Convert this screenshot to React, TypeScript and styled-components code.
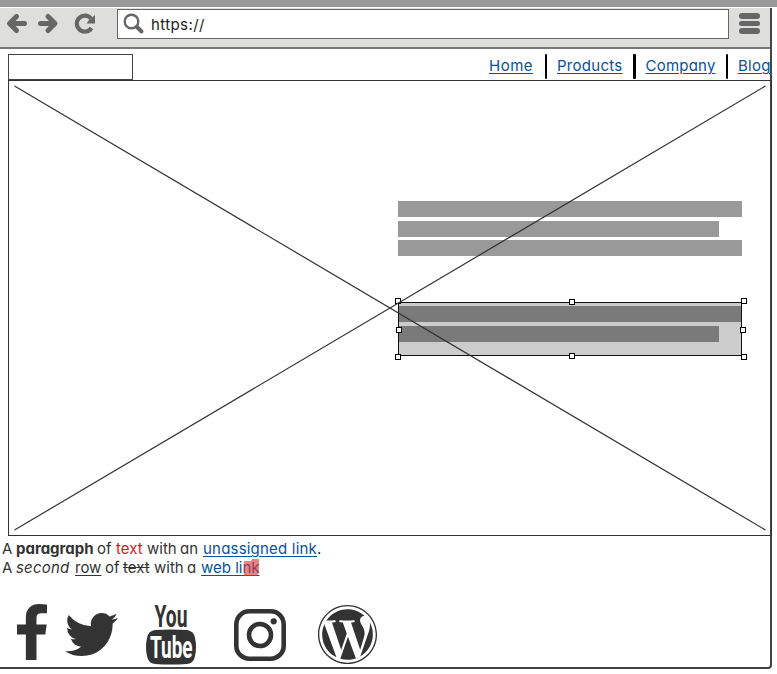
import React from "react";
import styled, { createGlobalStyle } from "styled-components";
import { FaWordpress } from "react-icons/fa";

const Global = createGlobalStyle`
  * { box-sizing: border-box; }
  body { margin: 0; background: #fff; overflow: hidden; }
`;

const Page = styled.div`
  width: 777px;
  height: 674px;
  overflow: hidden;
  color: #333;
  font-family: Inter, "Liberation Sans", sans-serif;
  font-feature-settings: "cv11";
  font-size: 15px;
`;
const TitleBar = styled.div`
  height: 7px;
  background: #999;
`;
const Browser = styled.div`
  margin-top: 1px;
  width: 772px;
  height: 661px;
  border: solid #444;
  border-width: 0 2px 2px 0;
  border-radius: 0 0 4px 0;
`;
const Toolbar = styled.header`
  display: flex;
  align-items: flex-start;
  height: 41px;
  background: #dededc;
  border-bottom: 2px solid #777;
`;
const NavIcons = styled.svg`
  width: 117px;
  height: 38px;
  flex: none;
`;
const Address = styled.div`
  display: flex;
  align-items: center;
  width: 612px;
  height: 30px;
  margin-top: 1px;
  padding-left: 5px;
  background: #fff;
  border: 1px solid #666;
  color: #222;
`;
const SearchIcon = styled.svg`
  width: 22px;
  height: 22px;
  margin-right: 6px;
`;
const Word = styled.span<{ $w?: number; $ls?: number; $color?: string }>`
  display: inline-block;
  width: ${(p) => (p.$w ? `${p.$w}px` : "auto")};
  letter-spacing: ${(p) => p.$ls ?? 0}px;
  color: ${(p) => p.$color ?? "inherit"};
  white-space: nowrap;
`;
const Menu = styled.div`
  display: flex;
  flex-direction: column;
  gap: 2px;
  margin: 5px 0 0 10px;
`;
const MenuBar = styled.i`
  width: 20.5px;
  height: 5.5px;
  border-radius: 3px;
  background: #666;
`;
const SiteHeader = styled.div`
  display: flex;
  justify-content: space-between;
  height: 31px;
  padding: 5px 0 0 8px;
`;
const LogoBox = styled.div`
  width: 125px;
  height: 26px;
  border: 1px solid #444;
`;
const SiteNav = styled.nav`
  display: flex;
  width: 281px;
  height: 26px;
`;
const NavCell = styled.div<{ $w: number }>`
  flex: none;
  display: flex;
  justify-content: space-between;
  width: ${(p) => p.$w}px;
  padding-right: 10px;
`;
const Divider = styled.i`
  width: 2.5px;
  height: 25px;
  background: #000;
  border-radius: 1px;
`;
const Link = styled.a<{ $ls?: number }>`
  color: #04529b;
  text-decoration: underline;
  text-decoration-thickness: 1px;
  text-underline-offset: 2px;
  line-height: 24px;
  letter-spacing: ${(p) => p.$ls ?? 0}px;
`;
const Hero = styled.section`
  position: relative;
  width: 764px;
  height: 456px;
  margin-left: 8px;
  border: 1px solid #333;
`;
const Cross = styled.svg`
  position: absolute;
  left: -1px;
  top: -1px;
  width: 764px;
  height: 456px;
  pointer-events: none;
`;
const Block = styled.div`
  position: absolute;
  left: 389px;
  top: 120px;
  display: flex;
  flex-direction: column;
  gap: 3.7px;
`;
const Bar = styled.i<{ $w: number; $dark?: boolean }>`
  width: ${(p) => p.$w}px;
  height: 16px;
  background: ${(p) => (p.$dark ? "#7a7a7a" : "#999")};
`;
const Selected = styled(Block)`
  top: 221px;
  width: 344px;
  height: 54px;
  padding-top: 3px;
  background: #ccc;
  border: 1px solid #111;
`;
const Handle = styled.b<{ $x: number; $y: number }>`
  position: absolute;
  left: ${(p) => p.$x}px;
  top: ${(p) => p.$y}px;
  width: 6px;
  height: 6px;
  background: #fff;
  border: 1px solid #000;
`;
const Copy = styled.div`
  padding: 3px 0 0 2px;
  line-height: 19px;
  white-space: nowrap;
`;
const Line = styled.p`
  margin: 0;
  height: 19px;
  display: flex;
`;
const Under = styled.span`
  text-decoration: underline;
  text-decoration-thickness: 1px;
  text-underline-offset: 2px;
`;
const WebLink = styled(Link)`
  position: relative;
  line-height: 19px;
`;
const Marker = styled.svg`
  position: absolute;
  left: 42px;
  top: 0;
  width: 17px;
  height: 18px;
`;
const Socials = styled.footer`
  display: flex;
  align-items: flex-start;
  padding: 27px 0 0 17px;
  fill: #333;
`;
const Glyph = styled.svg<{ $w: number; $h: number; $l?: number; $t?: number }>`
  flex: none;
  overflow: visible;
  width: ${(p) => p.$w}px;
  height: ${(p) => p.$h}px;
  margin: ${(p) => p.$t ?? 0}px 0 0 ${(p) => p.$l ?? 0}px;
`;
const LogoText = styled.text`
  font-family: Roboto, "Liberation Sans", sans-serif;
  font-weight: 700;
`;
const WordpressMark = styled(FaWordpress)`
  width: 61px;
  height: 61px;
  margin: 0 0 0 31px;
`;

const handles = [
  [-4, -4], [170, -3], [342, -4],
  [-3, 25], [341, 25],
  [-4, 52], [170, 51], [342, 52],
];

const links = [
  { text: "Home", width: 68, ls: 0.5 },
  { text: "Products", width: 88.5, ls: 0.28 },
  { text: "Company", width: 92.5, ls: 0.22 },
];

export default function App() {
  return (
    <Page>
      <Global />
      <TitleBar />
      <Browser>
        <Toolbar>
          <NavIcons fill="none" stroke="#666" strokeWidth="5" strokeLinecap="round" strokeLinejoin="round">
            <path d="M16.500 8.500 9.500 15.500l7 7M10 15.500H24.500M48 8.500l7 7-7 7M40.500 15.500H54" />
            <path d="M91 10.500A8 8 0 1 0 91.500 20" strokeWidth="4.200" strokeLinecap="butt" />
            <path d="M95 7v8.500h-8.500l2.500-3.500z" fill="#666" stroke="none" />
          </NavIcons>
          <Address>
            <SearchIcon fill="none" stroke="#666">
              <circle cx="8.500" cy="8.500" r="6.800" strokeWidth="2.400" />
              <path d="m14 14 4.500 4.500" strokeWidth="4" strokeLinecap="round" />
            </SearchIcon>
            <Word $ls={0.4}>https://</Word>
          </Address>
          <Menu><MenuBar /><MenuBar /><MenuBar /></Menu>
        </Toolbar>
        <SiteHeader>
          <LogoBox />
          <SiteNav>
            {links.map((l) => (
              <NavCell key={l.text} $w={l.width}>
                <Link $ls={l.ls}>{l.text}</Link>
                <Divider />
              </NavCell>
            ))}
            <Link $ls={0.3}>Blog</Link>
          </SiteNav>
        </SiteHeader>
        <Hero>
          <Block><Bar $w={343.5} /><Bar $w={321} /><Bar $w={343.5} /></Block>
          <Selected>
            <Bar $w={342} $dark /><Bar $w={320} $dark />
            {handles.map(([x, y]) => <Handle key={`${x},${y}`} $x={x} $y={y - 1} />)}
          </Selected>
          <Cross fill="none" stroke="#333" strokeWidth="1.200">
            <path d="m6.500 6 751 444M757.500 6 6.500 450" />
          </Cross>
        </Hero>
        <Copy>
          <Line>
            <Word $w={14}>A</Word><Word as="b" $w={81}>paragraph</Word><Word $w={19}>of</Word>
            <Word $w={31} $color="#d3181f">text</Word><Word $w={33}>with</Word><Word $w={23}>an</Word>
            <WebLink $ls={0.2}>unassigned link</WebLink>.
          </Line>
          <Line>
            <Word $w={14}>A</Word><Word as="i" $w={59} $ls={0.2}>second</Word><Word $w={30}><Under>row</Under></Word><Word $w={18}>of</Word>
            <Word $w={31}><s>text</s></Word><Word $w={33}>with</Word><Word $w={14}>a</Word>
            <WebLink>web link
              <Marker fill="#d33" fillOpacity=".6"><path d="M9 1h7v13l-2 4H1V3h7z" /></Marker>
            </WebLink>
          </Line>
        </Copy>
        <Socials>
          <Glyph $w={30} $h={56} viewBox="95 0 864 1664" preserveAspectRatio="none">
            <path d="M959 12v264h-157q-86 0-116 36t-30 108v189h293l-39 296h-254v759h-306v-759h-255v-296h255v-218q0-186 104-288.500t277-102.500q147 0 228 12z" />
          </Glyph>
          <Glyph $w={53} $h={43} $l={18} $t={9} viewBox="108 256 1576 1280" preserveAspectRatio="none">
            <path d="M1684 408q-67 98-162 167 1 14 1 42 0 130-38 259.500t-115.500 248.500-184.500 210.500-258 146-323 54.500q-271 0-496-145 35 4 78 4 225 0 401-138-105-2-188-64.500t-114-159.500q33 5 61 5 43 0 85-11-112-23-185.500-111.500t-73.500-205.500v-4q68 38 146 41-66-44-105-115t-39-154q0-88 44-163 121 149 294.500 238.500t371.500 99.500q-8-38-8-74 0-134 94.500-228.500t228.500-94.500q140 0 236 102 109-21 205-78-37 115-142 178 93-10 186-50z" />
          </Glyph>
          <Glyph $w={50} $h={62} $l={28} viewBox="0 0 50 62">
            <LogoText transform="translate(8.500 22.700) scale(.55 1)" fontSize="31" textLength="60" lengthAdjust="spacingAndGlyphs">You</LogoText>
            <path d="M9 26Q25 25 41 26 48 27 49 34 51 43 49 52 48 59 41 60 25 61 9 60 2 59 1 52-1 43 1 34 2 27 9 26Z" />
            <LogoText transform="translate(4 54) scale(.6 1)" fill="#fff" fontSize="31" textLength="71" lengthAdjust="spacingAndGlyphs">Tube</LogoText>
          </Glyph>
          <Glyph $w={52} $h={52} $l={38} $t={4.5} viewBox="0 0 52 52">
            <rect x="2.300" y="2.300" width="47.400" height="47.400" rx="13" fill="none" stroke="#333" strokeWidth="4.600" />
            <circle cx="26" cy="26" r="11" fill="none" stroke="#333" strokeWidth="4.600" />
            <circle cx="39.700" cy="12.300" r="3.100" />
          </Glyph>
          <WordpressMark />
        </Socials>
      </Browser>
    </Page>
  );
}
